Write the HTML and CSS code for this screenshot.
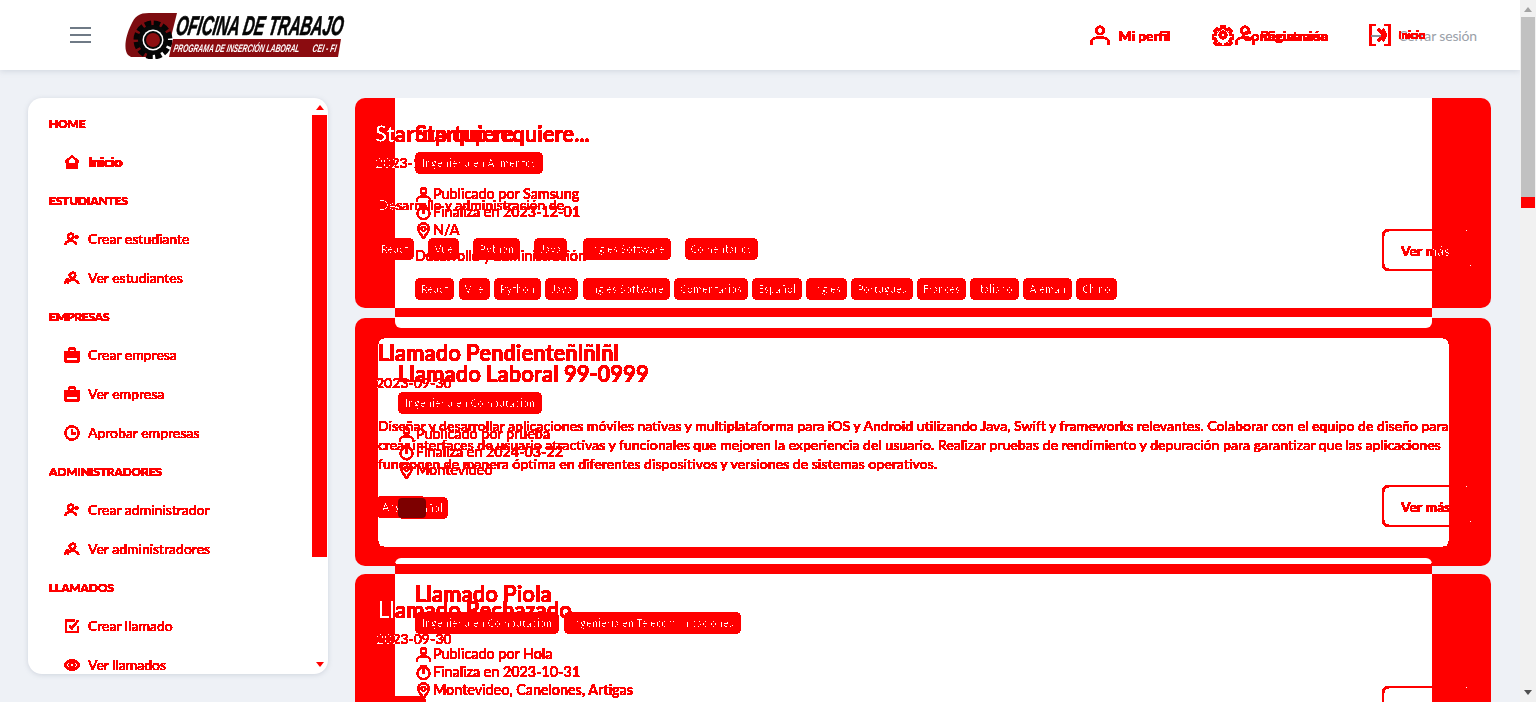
FILE: index.html
```html
<!DOCTYPE html>
<html lang="es">
<head>
<meta charset="utf-8">
<title>Oficina de Trabajo</title>
<link rel="stylesheet" href="styles.css">
</head>
<body>
<svg class="defs" width="0" height="0" aria-hidden="true">
  <defs>
    <filter id="threshold" x="-10%" y="-20%" width="120%" height="140%" color-interpolation-filters="sRGB">
      <feComponentTransfer>
        <feFuncG type="discrete" tableValues="0 0 0 0 0 0 0 0 0 0 0 0 0 0 0 1"/>
        <feFuncB type="discrete" tableValues="0 0 0 0 0 0 0 0 0 0 0 0 0 0 0 1"/>
      </feComponentTransfer>
    </filter>
    <filter id="crisp" x="-5%" y="-5%" width="110%" height="110%" color-interpolation-filters="sRGB">
      <feComponentTransfer>
        <feFuncA type="discrete" tableValues="0 1 1 1 1 1 1 1 1 1 1 1 1 1 1 1"/>
      </feComponentTransfer>
    </filter>
    <symbol id="i-user" viewBox="0 0 24 24"><circle cx="12" cy="7" r="4" fill="none" stroke="currentColor" stroke-width="2.200"/><path d="M2.500 22v-1.500c0-3.500 3-5.500 6-5.500h7c3 0 6 2 6 5.500V22" fill="none" stroke="currentColor" stroke-width="2.200"/></symbol>
    <symbol id="i-clock" viewBox="0 0 24 24"><circle cx="12" cy="13" r="8.500" fill="none" stroke="currentColor" stroke-width="2.400"/><path d="M12 8v6M8 2.500h8" fill="none" stroke="currentColor" stroke-width="2.400"/></symbol>
    <symbol id="i-pin" viewBox="0 0 24 24"><path d="M12 22.500C8 17 4.500 14 4.500 9.500a7.500 7.500 0 0 1 15 0C19.500 14 16 17 12 22.500z" fill="none" stroke="currentColor" stroke-width="2.400"/><circle cx="12" cy="9.500" r="2.800" fill="none" stroke="currentColor" stroke-width="2.200"/></symbol>
    <symbol id="i-home" viewBox="0 0 24 24"><path d="M2 12 12 3l10 9M5 10v11h14V10M10 21v-6h4v6" fill="none" stroke="currentColor" stroke-width="2.400"/></symbol>
    <symbol id="i-useradd" viewBox="0 0 24 24"><circle cx="10" cy="8" r="4" fill="none" stroke="currentColor" stroke-width="2.500"/><path d="M2 21c0-4 3-6 8-6s8 2 8 6M19 6v6M16 9h6" fill="none" stroke="currentColor" stroke-width="2.500"/></symbol>
    <symbol id="i-users" viewBox="0 0 24 24"><circle cx="13" cy="8" r="4" fill="none" stroke="currentColor" stroke-width="2.500"/><path d="M6 20c0-3 3-5 7-5s8 2 9 6M2 20c0-3 2-6 5-7M7 6l2 2" fill="none" stroke="currentColor" stroke-width="2.500"/></symbol>
    <symbol id="i-case" viewBox="0 0 24 24"><path fill="currentColor" fill-rule="evenodd" d="M8 1h8a2 2 0 0 1 2 2v3h4a1.500 1.500 0 0 1 1.500 1.500v14a1.500 1.500 0 0 1-1.500 1.500H2a1.500 1.500 0 0 1-1.500-1.500v-14A1.500 1.500 0 0 1 2 6h4V3a2 2 0 0 1 2-2zm0 5h8V3.500H8zM3.500 11v2h17v-2zm0 5v4h17v-4z"/></symbol>
    <symbol id="i-hour" viewBox="0 0 24 24"><circle cx="12" cy="12" r="10" fill="none" stroke="currentColor" stroke-width="2.600"/><path d="M12 6v7h6" fill="none" stroke="currentColor" stroke-width="2.600"/></symbol>
    <symbol id="i-check" viewBox="0 0 24 24"><path d="M21 12v9H3V4h13M8 11l4 4 9-11" fill="none" stroke="currentColor" stroke-width="2.800"/></symbol>
    <symbol id="i-eye" viewBox="0 0 24 24"><path d="M1.500 12C4 7.500 8 5 12 5s8 2.500 10.500 7C20 16.500 16 19 12 19s-8-2.500-10.500-7z" fill="none" stroke="currentColor" stroke-width="2.500"/><circle cx="12" cy="12" r="3.500" fill="none" stroke="currentColor" stroke-width="2.500"/></symbol>
    <symbol id="i-gear" viewBox="0 0 24 24"><path d="M10 1.500h4l.6 3 2.500 1.100 2.600-1.700 2.800 2.800-1.700 2.600 1.100 2.500 3 .6v4l-3 .6-1.100 2.500 1.700 2.600-2.800 2.800-2.600-1.700-2.500 1.100-.6 3h-4l-.6-3-2.500-1.100-2.600 1.700-2.800-2.800 1.700-2.600-1.100-2.500-3-.6v-4l3-.6 1.100-2.500-1.700-2.600 2.800-2.800 2.600 1.700 2.500-1.100z" transform="translate(1.800 1.800) scale(.85)" fill="none" stroke="currentColor" stroke-width="2.600"/><circle cx="12" cy="12" r="3.500" fill="none" stroke="currentColor" stroke-width="2.400"/></symbol>
  </defs>
</svg>

<div class="app">
  <div class="page">
    <header class="topbar">
      <button class="burger" aria-label="Menú"><span></span><span></span><span></span></button>
      <svg class="logo" viewBox="0 0 222 48" width="222" height="48" role="img" aria-label="Oficina de Trabajo">
        <path d="M3 44C-2 38 1 24 6 14 10 5 14 2 24 2h28L46 26H30L24 46H6z" fill="#7d0c10"/>
        <g transform="translate(28 29)">
          <circle r="16" fill="none" stroke="#050505" stroke-width="7" stroke-dasharray="6 2.400"/>
          <circle r="15" fill="#080808"/>
          <circle r="10.500" fill="#fff"/>
          <circle r="9" fill="#080808"/>
          <circle r="7" fill="#8d0f12"/>
        </g>
        <text class="logo-title" transform="translate(50 24) skewX(-10)" textLength="167" lengthAdjust="spacingAndGlyphs">OFICINA DE TRABAJO</text>
        <path d="M48 28h168l-3 18H44z" fill="#8b0c10"/>
        <text class="logo-sub" transform="translate(48 41) skewX(-10)" textLength="126" lengthAdjust="spacingAndGlyphs">PROGRAMA DE INSERCIÓN LABORAL</text>
        <text class="logo-sub" transform="translate(187 41) skewX(-10)" textLength="24" lengthAdjust="spacingAndGlyphs">CEI - FI</text>
      </svg>
      <nav class="topnav">
        <a class="toplink profile"><svg class="topicon"><use href="#i-user"/></svg><span class="toptext">Mi perfil</span></a>
        <a class="toplink config">
          <svg class="topicon"><use href="#i-gear"/></svg><svg class="topicon"><use href="#i-user"/></svg>
          <span class="toptext stacked">Configuración<span class="over-right">Registrarse</span></span>
        </a>
        <a class="toplink session">
          <svg class="topicon" viewBox="0 0 22 22">
            <path d="M1 12h11" stroke="#8b9199" stroke-width="2" fill="none"/>
            <path d="M7 1H1v20h6M15 1h6v20h-6M9 5l6 6-6 6M14 5l3 6-3 6" stroke="#f00" stroke-width="2.200" fill="none"/>
          </svg>
          <span class="toptext stacked grey">Cerrar sesión<span class="over-left">Inicio</span></span>
        </a>
      </nav>
    </header>

    <div class="content">
      <aside class="sidebar">
        <nav class="sidenav">
          <h4 class="nav-head">HOME</h4>
          <a class="nav-item doubled"><svg class="nav-icon"><use href="#i-home"/></svg>Inicio</a>
          <h4 class="nav-head">ESTUDIANTES</h4>
          <a class="nav-item"><svg class="nav-icon"><use href="#i-useradd"/></svg>Crear estudiante</a>
          <a class="nav-item"><svg class="nav-icon"><use href="#i-users"/></svg>Ver estudiantes</a>
          <h4 class="nav-head">EMPRESAS</h4>
          <a class="nav-item"><svg class="nav-icon"><use href="#i-case"/></svg>Crear empresa</a>
          <a class="nav-item"><svg class="nav-icon"><use href="#i-case"/></svg>Ver empresa</a>
          <a class="nav-item"><svg class="nav-icon"><use href="#i-hour"/></svg>Aprobar empresas</a>
          <h4 class="nav-head">ADMINISTRADORES</h4>
          <a class="nav-item"><svg class="nav-icon"><use href="#i-useradd"/></svg>Crear administrador</a>
          <a class="nav-item"><svg class="nav-icon"><use href="#i-users"/></svg>Ver administradores</a>
          <h4 class="nav-head">LLAMADOS</h4>
          <a class="nav-item"><svg class="nav-icon"><use href="#i-check"/></svg>Crear llamado</a>
          <a class="nav-item"><svg class="nav-icon"><use href="#i-eye"/></svg>Ver llamados</a>
        </nav>
        <div class="side-scroll">
          <span class="tri up"></span>
          <span class="side-thumb"></span>
          <span class="tri down"></span>
        </div>
      </aside>

      <main class="feed">
        <article class="card card-one">
          <div class="panel">
            <div class="panel-body body-one">
              <h2 class="title">Startup requiere...</h2>
              <div class="tags"><span class="tag">Ingeniería en Alimentos</span></div>
              <ul class="meta">
                <li><svg class="meta-icon"><use href="#i-user"/></svg>Publicado por Samsung</li>
                <li><svg class="meta-icon"><use href="#i-clock"/></svg>Finaliza en 2023-12-01</li>
                <li><svg class="meta-icon"><use href="#i-pin"/></svg>N/A</li>
              </ul>
              <p class="desc">Desarrollo y administración</p>
              <div class="tags tags-row">
                <span class="tag">React</span><span class="tag">Vue</span><span class="tag">Python</span><span class="tag">Java</span><span class="tag">Ingles Software</span><span class="tag">Comentarios</span><span class="tag">Español</span><span class="tag">Ingles</span><span class="tag">Portugues</span><span class="tag">Frances</span><span class="tag">Italiano</span><span class="tag">Aleman</span><span class="tag">Chino</span>
              </div>
            </div>
            <div class="band"></div>
          </div>
          <div class="ghost">
            <h2 class="ghost-text title at-a1">Startup quiere</h2>
            <span class="ghost-text small at-a2">2023-11-10</span>
            <span class="ghost-text small at-a3">Desarrollo y administración de</span>
            <div class="tags ghost-tags at-a4">
              <span class="tag">React</span><span class="tag">Vue</span><span class="tag">Python</span><span class="tag">Java</span><span class="tag gap-l">Ingles Software</span><span class="tag">Comentarios</span>
            </div>
            <a class="more at-more1"><span class="ghost-text">Ver más</span></a>
          </div>
        </article>

        <article class="card card-two">
          <div class="panel panel-two">
            <div class="panel-body body-two">
              <h2 class="title">Llamado Laboral 99-0999</h2>
              <div class="tags"><span class="tag">Ingeniería en Computación</span></div>
              <ul class="meta">
                <li><svg class="meta-icon"><use href="#i-user"/></svg>Publicado por prueba</li>
                <li><svg class="meta-icon"><use href="#i-clock"/></svg>Finaliza en 2024-03-22</li>
                <li><svg class="meta-icon"><use href="#i-pin"/></svg>Montevideo</li>
              </ul>
              <div class="tags tag-low"><span class="tag tag-wide">Español</span></div>
            </div>
          </div>
          <div class="ghost">
            <h2 class="ghost-text title at-b1">Llamado Pendienteñlñlñl</h2>
            <span class="ghost-text small at-b2">2023-09-30</span>
            <p class="ghost-text lead at-b3">Diseñar y desarrollar aplicaciones móviles nativas y multiplataforma para iOS y Android utilizando Java, Swift y frameworks relevantes. Colaborar con el equipo de diseño para crear interfaces de usuario atractivas y funcionales que mejoren la experiencia del usuario. Realizar pruebas de rendimiento y depuración para garantizar que las aplicaciones funcionen de manera óptima en diferentes dispositivos y versiones de sistemas operativos.</p>
            <div class="tags ghost-tags at-b4"><span class="tag tag-wide">Angular</span></div>
            <span class="overlap-mark"></span>
            <a class="more at-more2"><span class="ghost-text">Ver más</span></a>
          </div>
        </article>

        <article class="card card-three">
          <div class="strip"></div>
          <div class="panel">
            <div class="panel-body body-three">
              <h2 class="title">Llamado Piola</h2>
              <div class="tags"><span class="tag">Ingeniería en Computación</span><span class="tag">Ingeniería en Telecomunicaciones</span></div>
              <ul class="meta">
                <li><svg class="meta-icon"><use href="#i-user"/></svg>Publicado por Hola</li>
                <li><svg class="meta-icon"><use href="#i-clock"/></svg>Finaliza en 2023-10-31</li>
                <li><svg class="meta-icon"><use href="#i-pin"/></svg>Montevideo, Canelones, Artigas</li>
              </ul>
            </div>
          </div>
          <div class="ghost">
            <h2 class="ghost-text title at-c1">Llamado Rechazado</h2>
            <span class="ghost-text small at-c2">2023-09-30</span>
            <div class="tags ghost-tags at-c3"><span class="tag tag-wide">Angular</span></div>
            <a class="more at-more3"><span class="ghost-text">Ver más</span></a>
          </div>
        </article>
      </main>
    </div>
  </div>

  <div class="pagebar">
    <span class="tri up grey"></span>
    <span class="page-thumb"></span>
    <span class="page-mark"></span>
    <span class="page-spacer"></span>
    <span class="tri down dark"></span>
  </div>
</div>
</body>
</html>
```

FILE: styles.css
```css
* { box-sizing: border-box; }
html, body { margin: 0; height: 100%; overflow: hidden; }
body { font-family: Lato, "Noto Sans", sans-serif; background: #eef1f6; color: #f00; }
.defs { position: absolute; }
a { color: inherit; text-decoration: none; }
h2, h4, p, ul { margin: 0; padding: 0; }
ul { list-style: none; }

.app { display: flex; height: 702px; }
.page { width: 1520px; height: 702px; overflow: hidden; display: flex; flex-direction: column; }

/* top bar */
.topbar { height: 70px; flex: none; background: #fff; box-shadow: 0 1px 6px rgba(120, 130, 150, .25); display: flex; align-items: center; padding-left: 70px; position: relative; z-index: 5; }
.burger { width: 21px; height: 16px; padding: 0; border: 0; background: none; display: flex; flex-direction: column; justify-content: space-between; }
.burger span { display: block; height: 2px; background: #6f7a86; }
.logo { margin-left: 34px; margin-top: -1px; filter: blur(.35px); }
.logo-title { font: italic 700 27px "Liberation Sans Narrow", "Liberation Sans", sans-serif; fill: #050505; stroke: #050505; stroke-width: .7px; }
.logo-sub { font: italic 700 11px "Liberation Sans Narrow", "Liberation Sans", sans-serif; fill: #fff; }
.topnav { margin-left: auto; display: flex; align-items: center; padding-right: 43px; font-size: 14px; font-weight: 400; }
.toplink { display: flex; align-items: center; position: relative; }
.topicon { width: 22px; height: 22px; color: #f00; filter: url(#crisp); }
.toptext { margin-left: 7px; font-weight: 700; color: #f00; filter: url(#crisp); letter-spacing: -.1px; }
.profile { margin-right: 42px; }
.config { margin-right: 41px; }
.stacked { position: relative; white-space: nowrap; }
.config .toptext { margin-left: -14px; font-size: 14px; }
.over-right { position: absolute; right: 0; top: 0; }
.session .toptext { margin-left: 7px; }
.grey { color: #9aa0a8; filter: none; font-weight: 400; font-size: 14px; letter-spacing: -.15px; }
.over-left { position: absolute; left: 0; top: 0; color: #f00; font-weight: 700; font-size: 12px; letter-spacing: -.4px; filter: url(#crisp); }

/* layout */
.content { flex: 1; min-height: 0; display: flex; gap: 27px; padding: 28px 0 0 28px; align-items: flex-start; }

/* sidebar */
.sidebar { width: 300px; height: 576px; flex: none; background: #fff; border-radius: 14px; box-shadow: 0 1px 5px rgba(120, 130, 150, .25); display: flex; overflow: hidden; }
.sidenav { flex: 1; padding: 6px 0 0 21px; overflow: hidden; filter: url(#crisp); }
.nav-head { height: 38px; display: flex; align-items: center; font-size: 12px; font-weight: 900; letter-spacing: -.2px; color: #f00; }
.nav-item { height: 39px; display: flex; align-items: center; padding-left: 15px; font-size: 14px; color: #f00; white-space: nowrap; }
.nav-icon { width: 16px; height: 16px; margin-right: 8px; flex: none; }
.doubled { text-shadow: 1px 0 0 #f00; font-weight: 700; }
.side-scroll { width: 15px; margin-right: 1px; display: flex; flex-direction: column; align-items: center; padding-top: 7px; }
.side-thumb { width: 15px; height: 442px; margin-top: 5px; background: #f00; flex: none; }
.tri { width: 0; height: 0; border-left: 4px solid transparent; border-right: 4px solid transparent; flex: none; }
.tri.up { border-bottom: 5px solid #f00; }
.tri.down { border-top: 5px solid #f00; margin-top: 105px; }

/* cards */
.feed { width: 1136px; flex: none; display: flex; flex-direction: column; }
.card { position: relative; background: #f00; border-radius: 10px; display: flex; filter: url(#threshold); flex: none; }
.card-one { height: 210px; padding: 0 59px 0 40px; margin-bottom: 10px; z-index: 3; }
.card-two { height: 248px; padding: 20px 42px 19px 23px; margin-bottom: 8px; z-index: 1; }
.card-three { height: 300px; padding: 0 59px 0 40px; z-index: 2; }
.panel { flex: 1; background: #fff; border-radius: 0 0 6px 6px; }
.card-one .panel { height: 230px; }
.panel-two { border-radius: 6px; }
.card-three .panel { border-radius: 0; }
.panel-body { position: relative; z-index: 2; padding-left: 20px; }
.body-one { height: 210px; padding-top: 23px; }
.body-two { padding-top: 23px; }
.body-three { padding-top: 7px; }
.band { height: 9px; background: #f00; }
.strip { position: absolute; left: 40px; right: 59px; top: -16px; height: 16px; background: #f00; border-top: 6px solid #fff; border-radius: 6px 6px 0 0; z-index: 1; }

.title { font-size: 22px; line-height: 26px; font-weight: 700; color: #f00; white-space: nowrap; }
.tags { display: flex; gap: 5px; margin-top: 5px; }
.tag { height: 22px; padding: 0 7px; display: inline-flex; align-items: center; border-radius: 6px; background: #f00; color: #fff; font-size: 10.500px; font-weight: 700; letter-spacing: .2px; white-space: nowrap; }
.meta { margin-top: 11px; font-size: 14.300px; line-height: 18px; font-weight: 500; color: #f00; }
.meta li { display: flex; align-items: center; gap: 1px; white-space: nowrap; }
.meta-icon { width: 17px; height: 17px; flex: none; }
.desc { margin-top: 7px; font-size: 14.300px; line-height: 20px; font-weight: 500; color: #f00; }
.tags-row { margin-top: 12px; gap: 4.300px; }
.tags-row .tag, .ghost-tags .tag { padding: 0 6px; }
.tag-low { margin-top: 18px; }

/* second layer of text, laid over the card */
.ghost { position: absolute; inset: 0; }
.ghost-text { color: #0ff; mix-blend-mode: difference; white-space: nowrap; }
.small { font-size: 14px; line-height: 18px; font-weight: 500; }
.lead { font-size: 14.100px; line-height: 19px; font-weight: 500; white-space: normal; width: 1074px; }
.at-a1, .at-a2, .at-a3, .at-a4, .at-b1, .at-b2, .at-b3, .at-b4, .at-c1, .at-c2, .at-c3, .more, .overlap-mark { position: absolute; }
.ghost-tags { margin: 0; gap: 14px; }
.ghost-tags .tag { position: relative; }
.gap-l { margin-left: 2px; }
.tag-wide { width: 50px; }
.at-a1 { left: 20px; top: 23px; }
.at-a2 { left: 20px; top: 56px; }
.at-a3 { left: 23px; top: 98px; }
.at-a4 { left: 20px; top: 140px; }
.at-b1 { left: 23px; top: 22px; }
.at-b2 { left: 21px; top: 56px; }
.at-b3 { left: 23px; top: 98px; }
.at-b4 { left: 21px; top: 178px; }
.overlap-mark { left: 43px; top: 180px; width: 28px; height: 20px; background: #7d0000; border-radius: 4px; z-index: 3; }
.at-c1 { left: 23px; top: 23px; }
.at-c2 { left: 21px; top: 56px; }
.at-c3 { left: 21px; top: 122px; }
.more { width: 90px; height: 42px; left: 1027px; display: flex; align-items: center; padding-left: 17px; border: 2px solid #f00; border-radius: 7px; font-size: 14px; font-weight: 700; }
.more::before, .more::after { content: ""; position: absolute; right: -1px; width: 4px; height: 4px; border-right: 1px dotted #fff; }
.more::before { top: -1px; border-top: 1px dotted #fff; border-top-right-radius: 4px; }
.more::after { bottom: -1px; border-bottom: 1px dotted #fff; border-bottom-right-radius: 4px; }
.at-more1 { top: 131px; }
.at-more2 { top: 167px; }
.at-more3 { top: 112px; }

/* page scrollbar */
.pagebar { width: 16px; height: 702px; background: #f1f1f1; display: flex; flex-direction: column; align-items: center; padding-top: 7px; }
.tri.up.grey { border-bottom-color: #a3a3a3; }
.page-thumb { width: 14px; height: 180px; margin-top: 5px; background: #c1c1c1; flex: none; }
.page-mark { width: 14px; height: 11px; background: #f00; flex: none; }
.page-spacer { flex: 1; }
.tri.down.dark { border-top-color: #505050; margin: 0 0 7px; }
```
